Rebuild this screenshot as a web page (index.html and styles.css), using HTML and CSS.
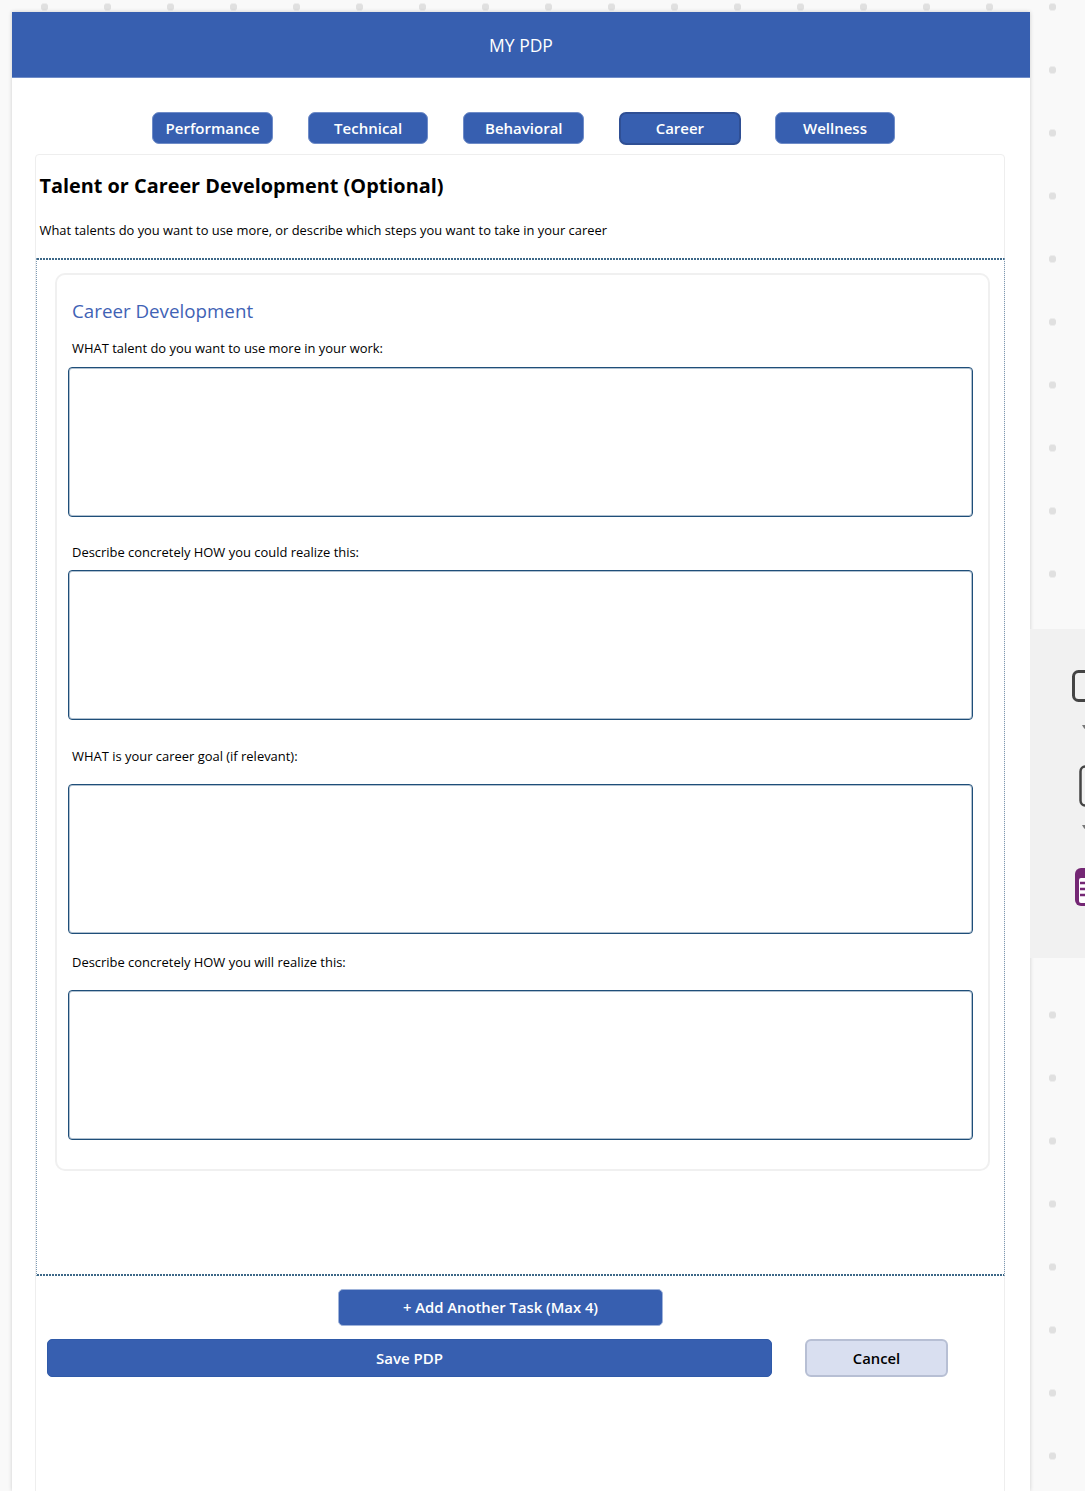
FILE: index.html
```html
<!DOCTYPE html>
<html lang="en">
<head>
    <meta charset="UTF-8">
    <meta name="viewport" content="width=device-width, initial-scale=1.0">
    <title>My PDP</title>
    <link rel="stylesheet" href="styles.css">
</head>
<body>

    <div class="screen">
        <header class="app-header">MY PDP</header>

        <!-- Tabs -->
        <nav class="tabs">
            <button type="button" class="tab">Performance</button>
            <button type="button" class="tab">Technical</button>
            <button type="button" class="tab">Behavioral</button>
            <button type="button" class="tab tab-active">Career</button>
            <button type="button" class="tab">Wellness</button>
        </nav>

        <div class="page-card">
            <h1>Talent or Career Development (Optional)</h1>
            <p class="intro">What talents do you want to use more, or describe which steps you want to take in your career</p>

            <div class="gallery">
                <div class="task-card">
                    <h2>Career Development</h2>

                    <label class="field-label label-first" for="talent">WHAT talent do you want to use more in your work:</label>
                    <textarea id="talent" class="input-box"></textarea>

                    <label class="field-label label-second" for="talentHow">Describe concretely HOW you could realize this:</label>
                    <textarea id="talentHow" class="input-box"></textarea>

                    <label class="field-label label-third" for="goal">WHAT is your career goal (if relevant):</label>
                    <textarea id="goal" class="input-box"></textarea>

                    <label class="field-label label-fourth" for="goalHow">Describe concretely HOW you will realize this:</label>
                    <textarea id="goalHow" class="input-box"></textarea>
                </div>
            </div>

            <div class="add-row">
                <button type="button" class="add-button">+ Add Another Task (Max 4)</button>
            </div>

            <div class="action-row">
                <button type="button" class="save-button">Save PDP</button>
                <button type="button" class="cancel-button">Cancel</button>
            </div>
        </div>
    </div>

    <!-- Tree view panel, cut off by the window edge -->
    <aside class="side-panel">
        <svg class="side-icons" width="55" height="329" viewBox="0 0 55 329" fill="none">
            <rect x="43.500" y="42.500" width="30" height="29" rx="5" stroke="#444" stroke-width="3"/>
            <path d="M52 96l2.500 4 2.500-4z" fill="#777"/>
            <rect x="50.500" y="137.500" width="30" height="39" rx="5" stroke="#444" stroke-width="2.500"/>
            <path d="M52 196l2.500 4 2.500-4z" fill="#777"/>
            <rect x="45" y="239" width="30" height="38" rx="6" fill="#742774"/>
            <rect x="49" y="249" width="30" height="25" rx="2" fill="#fff"/>
            <path d="M50 254h10M50 260h10M50 266h10" stroke="#742774" stroke-width="2.500"/>
        </svg>
    </aside>

</body>
</html>
```

FILE: styles.css
```css
/* Basic Styles */
html, body {
    height: 1491px;
    overflow: hidden;
}

body {
    margin: 0;
    padding: 12px 0 0 12px;
    box-sizing: border-box;
    font-family: 'Open Sans', 'Liberation Sans', sans-serif;
    background-color: #f9f9f9;
    background-image: radial-gradient(circle, #e0e0e0 3.5px, transparent 4px);
    background-size: 63px 63px;
    background-position: 13px -24.5px;
}

button {
    font-family: inherit;
    cursor: pointer;
}

.screen {
    width: 1018px;
    height: 1479px;
    background-color: white;
    box-shadow: 0 0 4px rgba(0, 0, 0, 0.18);
    overflow: hidden;
}

.app-header {
    height: 66px;
    background-color: #375fb0;
    border-bottom: 1px solid #6f8cc8;
    box-sizing: border-box;
    color: white;
    font-size: 17.5px;
    line-height: 67px;
    text-align: center;
}

/* Tabs */
.tabs {
    display: flex;
    gap: 35px;
    padding: 34px 0 0 140.3px;
}

.tab {
    width: 120.6px;
    height: 32px;
    padding: 0 0 1px;
    background-color: #375fb0;
    border: 1px solid #6f8cc8;
    border-radius: 7px;
    color: white;
    font-size: 15px;
    font-weight: 600;
}

.tab-active {
    width: 121.6px;
    height: 33px;
    margin-right: -1px;
    padding-bottom: 2px;
    border: 2px solid #2f4f94;
}

/* Page card */
.page-card {
    margin: 9px 0 0 23px;
    width: 970px;
    height: 1400px;
    box-sizing: border-box;
    border: 1px solid #eeeeee;
    border-radius: 4px;
}

h1 {
    margin: 17px 0 0 3.5px;
    font-size: 19.85px;
    font-weight: 700;
    line-height: 27px;
    color: black;
}

.intro {
    margin: 22px 0 0 3.5px;
    font-size: 12.9px;
    line-height: 18px;
    color: black;
}

/* Dashed frame: fine dashes on top and bottom, dots on the sides */
.gallery {
    margin: 19px -1px 0 0;
    height: 1018px;
    box-sizing: border-box;
    border-left: 1px dotted #7d9ab4;
    border-right: 1px dotted #7d9ab4;
    padding: 15px 14px 0 18px;
    background:
        repeating-linear-gradient(90deg, #3d6888 0 2px, transparent 2px 3px) top left / 100% 2px no-repeat,
        repeating-linear-gradient(90deg, #3d6888 0 2px, transparent 2px 3px) bottom left / 100% 2px no-repeat;
}

.task-card {
    height: 898px;
    box-sizing: border-box;
    border: 2px solid #f0f0f0;
    border-radius: 10px;
    padding: 0 0 0 11px;
}

h2 {
    margin: 22px 0 0 4px;
    font-size: 18.75px;
    font-weight: 400;
    line-height: 27px;
    color: #3f62b5;
}

.field-label {
    display: block;
    margin-left: 4px;
    font-size: 12.95px;
    line-height: 18px;
    color: black;
}

.label-first { margin-top: 15px; margin-bottom: 10px; }
.label-second { margin-top: 26px; margin-bottom: 9px; }
.label-third { margin-top: 27px; margin-bottom: 19px; }
.label-fourth { margin-top: 19px; margin-bottom: 19px; }

.input-box {
    display: block;
    width: 905px;
    height: 150px;
    padding: 6px;
    box-sizing: border-box;
    background-color: white;
    border: 1px solid #1f4e79;
    border-radius: 4px;
    box-shadow: inset 0 0 0 1px rgba(31, 78, 121, 0.35);
    resize: none;
}

/* Buttons under the gallery */
.add-row {
    padding: 13px 0 0 302px;
}

.add-button {
    display: block;
    width: 325px;
    height: 37px;
    padding: 0 0 2px;
    background-color: #375fb0;
    border: 1px solid #9fb3da;
    border-radius: 5px;
    color: white;
    font-size: 14.8px;
    font-weight: 600;
}

.action-row {
    display: flex;
    gap: 33px;
    padding: 13px 0 0 11px;
}

.save-button {
    width: 725px;
    height: 38px;
    padding: 0 0 1px;
    background-color: #375fb0;
    border: 1px solid #2f5aa8;
    border-radius: 5px;
    color: white;
    font-size: 15px;
    font-weight: 600;
}

.cancel-button {
    width: 143px;
    height: 38px;
    padding: 0 0 1px;
    background-color: #d9dff0;
    border: 2px solid #b7bfd4;
    border-radius: 6px;
    color: black;
    font-size: 14.8px;
    font-weight: 600;
}

/* Side panel */
.side-panel {
    position: absolute;
    left: 1030px;
    top: 629px;
    width: 55px;
    height: 329px;
    background-color: #f1f1f1;
    overflow: hidden;
}

.side-icons {
    display: block;
}
```
